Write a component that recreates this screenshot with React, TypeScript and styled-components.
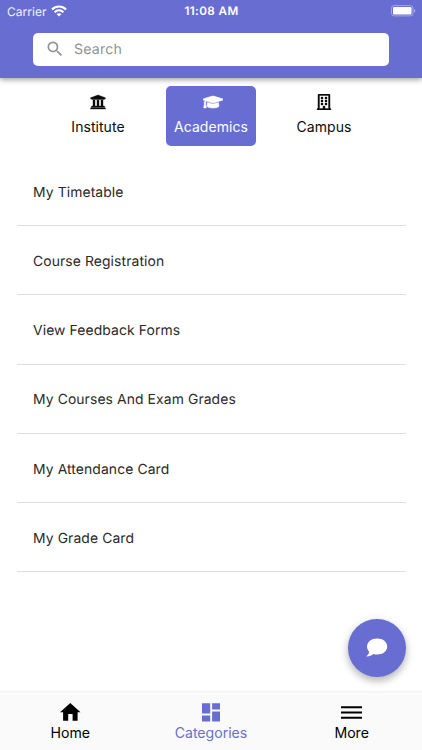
import React from "react";
import styled, { createGlobalStyle } from "styled-components";
import { FaUniversity, FaGraduationCap, FaRegBuilding } from "react-icons/fa";
import { MdSearch } from "react-icons/md";

const accent = "#686ed1";

const GlobalStyle = createGlobalStyle`
  *, *::before, *::after { box-sizing: border-box; }
  body { margin: 0; background: #fff; }
  button { border: 0; margin: 0; padding: 0; background: none; font: inherit; color: inherit; letter-spacing: inherit; }
  svg { display: block; flex: none; }
`;

const Screen = styled.div`
  position: relative;
  display: flex;
  flex-direction: column;
  width: 422px;
  height: 750px;
  overflow: hidden;
  background: #fff;
  color: #0b0b0b;
  font-family: Inter, "Liberation Sans", sans-serif;
  text-rendering: geometricPrecision;
`;

const Header = styled.header`
  flex: none;
  height: 77.5px;
  background: ${accent};
  box-shadow: 0 2px 5px rgba(0, 0, 0, 0.35);
`;

const StatusBar = styled.div`
  display: grid;
  grid-template-columns: 1fr auto 1fr;
  align-items: center;
  height: 22px;
  padding: 0 6px 0 7px;
  color: #fff;
  font-size: 11.7px;
`;

const Carrier = styled.div`
  display: flex;
  align-items: center;
  gap: 4px;
  color: #f0f0fb;
  font-size: 12px;
  letter-spacing: 0.05px;
`;

const Clock = styled.div`
  font-weight: 600;
  letter-spacing: 0.4px;
`;

const BatterySlot = styled.div`
  justify-self: end;
`;

const SearchBox = styled.label`
  display: flex;
  align-items: center;
  gap: 9px;
  width: 356px;
  height: 32.5px;
  margin: 11px 0 0 33px;
  padding-left: 12px;
  border-radius: 5px;
  background: #fff;
  color: #929292;
`;

const SearchInput = styled.input`
  flex: 1;
  min-width: 0;
  padding: 0;
  border: 0;
  outline: 0;
  background: none;
  font: 14.2px Inter, sans-serif;
  letter-spacing: 0.15px;
  text-rendering: geometricPrecision;
  &::placeholder { color: #929292; opacity: 1; }
`;

const Tabs = styled.nav`
  display: grid;
  grid-template-columns: repeat(3, 90px);
  column-gap: 23px;
  flex: none;
  margin: 8.5px 0 0 53px;
`;

const Tab = styled.button<{ $active?: boolean }>`
  display: flex;
  flex-direction: column;
  align-items: center;
  height: 60px;
  padding-top: 6px;
  border-radius: 5px;
  background: ${(p) => (p.$active ? accent : "transparent")};
  color: ${(p) => (p.$active ? "#fff" : "#0b0b0b")};
  font-size: 14px;
  line-height: 18px;
  letter-spacing: 0.05px;
`;

const TabIcon = styled.span<{ $indent?: number }>`
  display: grid;
  place-items: center;
  height: 20px;
  margin-bottom: 6px;
  padding-left: ${(p) => p.$indent ?? 0}px;
`;

const List = styled.main`
  flex: 1;
  margin: 11px 16px 0 17px;
`;

const Row = styled.div`
  display: flex;
  align-items: center;
  height: 69.2px;
  padding: 3.4px 16px 0;
  border-bottom: 1px solid #dedede;
  color: #2a2a2a;
  font-size: 13.9px;
  letter-spacing: 0.1px;
`;

const BottomBar = styled.nav`
  display: grid;
  grid-template-columns: repeat(3, 1fr);
  flex: none;
  height: 59px;
  border-top: 1px solid #f3f3f3;
  background: #fafafa;
`;

const BottomItem = styled.button<{ $active?: boolean }>`
  display: flex;
  flex-direction: column;
  align-items: center;
  padding-top: 8px;
  color: ${(p) => (p.$active ? accent : "#000")};
  font-size: 14.1px;
  line-height: 18px;
  letter-spacing: 0;
`;

const BottomIcon = styled.span`
  display: grid;
  place-items: center;
  height: 24px;
`;

const ChatButton = styled.button`
  position: absolute;
  right: 16.5px;
  bottom: 73.5px;
  display: grid;
  place-items: center;
  width: 57.5px;
  height: 57.5px;
  border-radius: 50%;
  background: ${accent};
  color: #fff;
  box-shadow: 0 4px 7px rgba(0, 0, 0, 0.22), 0 2px 12px rgba(0, 0, 0, 0.1);
`;

const WifiIcon = () => (
  <svg width="16" height="12" viewBox="0 0 16 12" fill="none" stroke="#fff" strokeWidth="2.2">
    <path d="M1 4.5C5 .5 11 .5 15 4.5" />
    <path d="M3.6 7.2c2.6-2.4 6.2-2.4 8.8 0" />
    <path d="M8 11.6 5.5 9.1c1.4-1.3 3.6-1.3 5 0Z" fill="#fff" stroke="none" />
  </svg>
);

const BatteryIcon = () => (
  <svg width="25" height="12" viewBox="0 0 25 12">
    <rect x=".5" y=".6" width="21.5" height="10.3" rx="2.6" fill="none" stroke="#a4a8e4" />
    <rect x="2" y="2.1" width="18.5" height="7.3" rx="1.2" fill="#fff" />
    <path d="M23.2 4v3.6c1.4-.5 1.4-3.1 0-3.6Z" fill="#b4b7e8" />
  </svg>
);

const HomeIcon = () => (
  <svg width="21" height="18" viewBox="0 0 21 18">
    <path d="M10.3 0 20.5 9.2H17.6V17.7H12.6V11H8.2V17.7H3.1V9.2H0Z" fill="#000" />
  </svg>
);

const DashboardIcon = () => (
  <svg width="18" height="19" viewBox="0 0 18 19" fill="currentColor">
    <path d="M0 .3h8.2v10.2H0ZM0 12.4h8.2v6.2H0ZM10.1.3H18v6.2h-7.9ZM10.1 8.4H18v10.2h-7.9Z" />
  </svg>
);

const MenuIcon = () => (
  <svg width="21" height="13" viewBox="0 0 21 13" fill="currentColor">
    <path d="M0 .2h21v2.1H0ZM0 5.5h21v2.1H0ZM0 10.7h21v2.1H0Z" />
  </svg>
);

const BubbleIcon = () => (
  <svg width="22" height="19" viewBox="0 0 22 19">
    <path d="M11.2.5C17 .5 21.2 4 21.2 8.6s-4.2 8-10 8c-1.4 0-2.7-.2-3.9-.6C5.8 17.3 3.4 18.5 1 18.6c-.5 0-.6-.5-.2-.8 1.4-1 2.2-2.5 2.4-4C1.8 12.4 1 10.6 1 8.6 1 4 5.4.5 11.2.5Z" fill="currentColor" />
  </svg>
);

const rows = [
  "My Timetable",
  "Course Registration",
  "View Feedback Forms",
  "My Courses And Exam Grades",
  "My Attendance Card",
  "My Grade Card",
];

export default function App() {
  return (
    <>
      <GlobalStyle />
      <Screen>
        <Header>
          <StatusBar>
            <Carrier>Carrier <WifiIcon /></Carrier>
            <Clock>11:08 AM</Clock>
            <BatterySlot><BatteryIcon /></BatterySlot>
          </StatusBar>
          <SearchBox>
            <MdSearch size={20} />
            <SearchInput placeholder="Search" />
          </SearchBox>
        </Header>
        <Tabs>
          <Tab><TabIcon><FaUniversity size={16} stroke="currentColor" strokeWidth={12} /></TabIcon>Institute</Tab>
          <Tab $active><TabIcon $indent={4}><FaGraduationCap size={20} stroke="currentColor" strokeWidth={16} /></TabIcon>Academics</Tab>
          <Tab><TabIcon><FaRegBuilding size={16} stroke="currentColor" strokeWidth={12} /></TabIcon>Campus</Tab>
        </Tabs>
        <List>
          {rows.map((name) => <Row key={name}>{name}</Row>)}
        </List>
        <BottomBar>
          <BottomItem><BottomIcon><HomeIcon /></BottomIcon>Home</BottomItem>
          <BottomItem $active><BottomIcon><DashboardIcon /></BottomIcon>Categories</BottomItem>
          <BottomItem><BottomIcon><MenuIcon /></BottomIcon>More</BottomItem>
        </BottomBar>
        <ChatButton aria-label="Chat"><BubbleIcon /></ChatButton>
      </Screen>
    </>
  );
}
